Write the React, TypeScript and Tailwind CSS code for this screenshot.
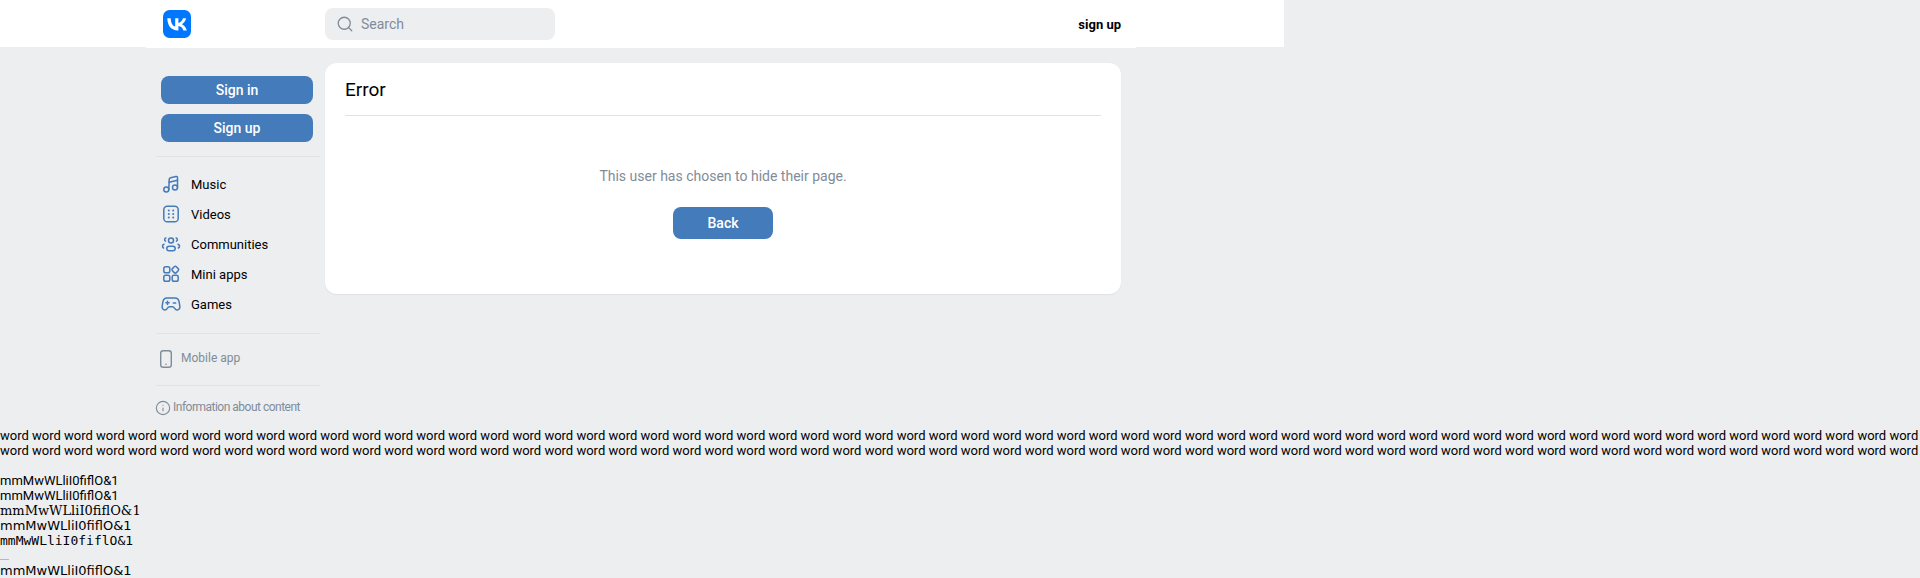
import React from 'react';
import { Search, Info } from 'lucide-react';

const navItems = ['Music', 'Videos', 'Communities', 'Mini apps', 'Games'];

function VkLogo() {
  return (
    <svg width="28" height="28" viewBox="0 0 28 28" className="block">
      <rect width="28" height="28" rx="6.5" fill="#0077ff" />
      <path
        d="M14.9 20.4C8.3 20.4 4.5 15.8 4.3 8.2h3.4c.1 5.6 2.6 7.9 4.5 8.4V8.2h3.2v4.8c1.9-.2 3.9-2.4 4.6-4.8h3.1c-.5 3-2.7 5.1-4.2 6 1.5.7 4 2.7 4.9 6.2h-3.4c-.7-2.3-2.6-4.1-5-4.3v4.3h-.5z"
        fill="#fff"
      />
    </svg>
  );
}

function MusicIcon() {
  return (
    <svg width="20" height="20" viewBox="0 0 20 20" fill="none" stroke="currentColor" strokeWidth="1.5" strokeLinecap="round" strokeLinejoin="round">
      <circle cx="5.3" cy="15.6" r="2.5" />
      <circle cx="14" cy="13.6" r="2.5" />
      <path d="M7.8 15.6 8.2 5.6c0-1 .5-1.7 1.5-1.9l5.2-1.2c1-.2 1.6.3 1.6 1.3v9.8" />
      <path d="M8.1 8.2 16.5 6.2" />
    </svg>
  );
}

function VideoIcon() {
  return (
    <svg width="20" height="20" viewBox="0 0 20 20" fill="none" stroke="currentColor" strokeWidth="1.5">
      <rect x="2.8" y="2.2" width="14.4" height="15.6" rx="3.4" />
      <g fill="currentColor" stroke="none">
        <circle cx="7.8" cy="6.4" r="1" />
        <circle cx="12.2" cy="6.4" r="1" />
        <circle cx="7.8" cy="10" r="1" />
        <circle cx="12.2" cy="10" r="1" />
        <circle cx="7.8" cy="13.6" r="1" />
        <circle cx="12.2" cy="13.6" r="1" />
      </g>
    </svg>
  );
}

function CommunitiesIcon() {
  return (
    <svg width="20" height="20" viewBox="0 0 20 20" fill="none" stroke="currentColor" strokeWidth="1.5" strokeLinecap="round">
      <circle cx="10" cy="6.4" r="2.5" />
      <rect x="5.8" y="12.2" width="8.4" height="4.6" rx="2.3" />
      <path d="M4.9 3.9c-1.3.2-1.9 2.5-.4 3.2" />
      <path d="M15.1 3.9c1.3.2 1.9 2.5.4 3.2" />
      <path d="M3 10.2c-1.6.5-2.2 2.7-.4 3.8" />
      <path d="M17 10.2c1.6.5 2.2 2.7.4 3.8" />
    </svg>
  );
}

function MiniAppsIcon() {
  return (
    <svg width="20" height="20" viewBox="0 0 20 20" fill="none" stroke="currentColor" strokeWidth="1.5">
      <rect x="2.8" y="2.8" width="6" height="6" rx="1.8" />
      <rect x="11.5" y="2.9" width="5.6" height="5.6" rx="1.5" transform="rotate(45 14.3 5.7)" />
      <rect x="2.8" y="11.2" width="6" height="6" rx="1.8" />
      <rect x="11.2" y="11.2" width="6" height="6" rx="1.8" />
    </svg>
  );
}

function GamesIcon() {
  return (
    <svg width="20" height="20" viewBox="0 0 20 20" fill="none" stroke="currentColor" strokeWidth="1.5" strokeLinecap="round" strokeLinejoin="round">
      <path d="M6 4h8c2.4 0 3.6 1.4 4.1 3.7l.7 4.3c.4 2.4-.9 4-2.6 4-1.3 0-2-.8-2.7-1.9-.6-.9-1-1.3-2-1.3H8.5c-1 0-1.4.4-2 1.3C5.8 15.2 5.1 16 3.8 16c-1.7 0-3-1.6-2.6-4l.7-4.3C2.4 5.4 3.6 4 6 4z" />
      <path d="M6.5 7.2v3.2M4.9 8.800h3.200" />
      <path d="M12.300 9h2.400" />
    </svg>
  );
}

function PhoneIcon() {
  return (
    <svg width="20" height="20" viewBox="0 0 20 20" fill="none" stroke="currentColor" strokeWidth="1.4">
      <rect x="4.7" y="1.7" width="10.6" height="16.6" rx="2.6" />
      <circle cx="10" cy="15.2" r=".8" fill="currentColor" stroke="none" />
    </svg>
  );
}

function NavIcon({ name }: { name: string }) {
  if (name === 'Music') return <MusicIcon />;
  if (name === 'Videos') return <VideoIcon />;
  if (name === 'Communities') return <CommunitiesIcon />;
  if (name === 'Mini apps') return <MiniAppsIcon />;
  return <GamesIcon />;
}

export default function App() {
  const words = Array.from({ length: 120 }, () => 'word').join(' ');
  const sample = 'mmMwWLliI0fiflO&1';

  return (
    <div className="h-[578px] overflow-hidden bg-[#eceef0] font-['Roboto',sans-serif] text-[13px] leading-[15px] text-black">
      {/* Header */}
      <header className="h-[47px] w-[1284px] bg-white">
        <div className="ml-[146px] flex h-[48px] w-[990px] items-center bg-white pl-[17px]">
          <VkLogo />
          <div className="ml-[134px] flex h-[32px] w-[230px] items-center gap-[7px] rounded-lg bg-[#eceef0] pl-[11px] text-[14px] text-[#818c99]">
            <Search size={18} strokeWidth={1.7} />
            Search
          </div>
          <span className="ml-auto mr-[15px] font-bold">sign up</span>
        </div>
      </header>

      <div className="ml-[156px] mt-[16px] flex h-[363px] items-start">
        {/* Sidebar */}
        <aside className="w-[164px]">
          <div className="flex flex-col gap-[10px] pb-[14px] pl-[5px] pr-[7px] pt-[13px]">
            <button className="h-[28px] rounded-lg bg-[#447bba] text-[14px] font-medium text-white">Sign in</button>
            <button className="h-[28px] rounded-lg bg-[#447bba] text-[14px] font-medium text-white">Sign up</button>
          </div>
          <div className="border-t border-[#dfe2e7] pb-[14px] pt-[12px]">
            {navItems.map((item) => (
              <div key={item} className="flex h-[30px] items-center gap-[10px] pl-[5px]">
                <span className="text-[#447bba]">
                  <NavIcon name={item} />
                </span>
                {item}
              </div>
            ))}
          </div>
          <div className="flex h-[52px] items-center gap-[5px] border-t border-[#dfe2e7] pb-[2px] text-[#818c99]">
            <PhoneIcon />
            <span className="text-[12px]">Mobile app</span>
          </div>
          <div className="flex h-[44px] items-center gap-[2px] border-t border-[#dfe2e7] text-[12px] tracking-[-0.5px] text-[#818c99]">
            <Info size={16} strokeWidth={1.7} className="-ml-px" />
            Information about content
          </div>
        </aside>

        {/* Error card */}
        <main className="ml-[5px] h-[231px] w-[796px] rounded-xl bg-white px-[20px] shadow-[0_1px_1px_#dfe2e7]">
          <h1 className="flex h-[53px] items-center border-b border-[#dfe2e7] text-[19px]">Error</h1>
          <div className="flex flex-col items-center pt-[51px]">
            <p className="text-[14px] leading-[18px] text-[#818c99]">This user has chosen to hide their page.</p>
            <button className="mt-[22px] h-[32px] w-[100px] rounded-lg bg-[#447bba] text-[14px] font-medium text-white">Back</button>
          </div>
        </main>
      </div>

      {/* Font probe text */}
      <div className="mt-[2px] w-[1920px]">{words}</div>
      <div className="mt-[15px]">
        <div>{sample}</div>
        <div>{sample}</div>
        <div className="font-['DejaVu_Serif',serif]">{sample}</div>
        <div className="font-['DejaVu_Sans',sans-serif]">{sample}</div>
        <div className="font-['DejaVu_Sans_Mono',monospace]">{sample}</div>
        <div className="mt-[11px] h-px w-[9px] bg-[#b5b8bd]" />
        <div className="mt-[3px] font-['DejaVu_Sans',sans-serif]">{sample}</div>
      </div>
    </div>
  );
}
